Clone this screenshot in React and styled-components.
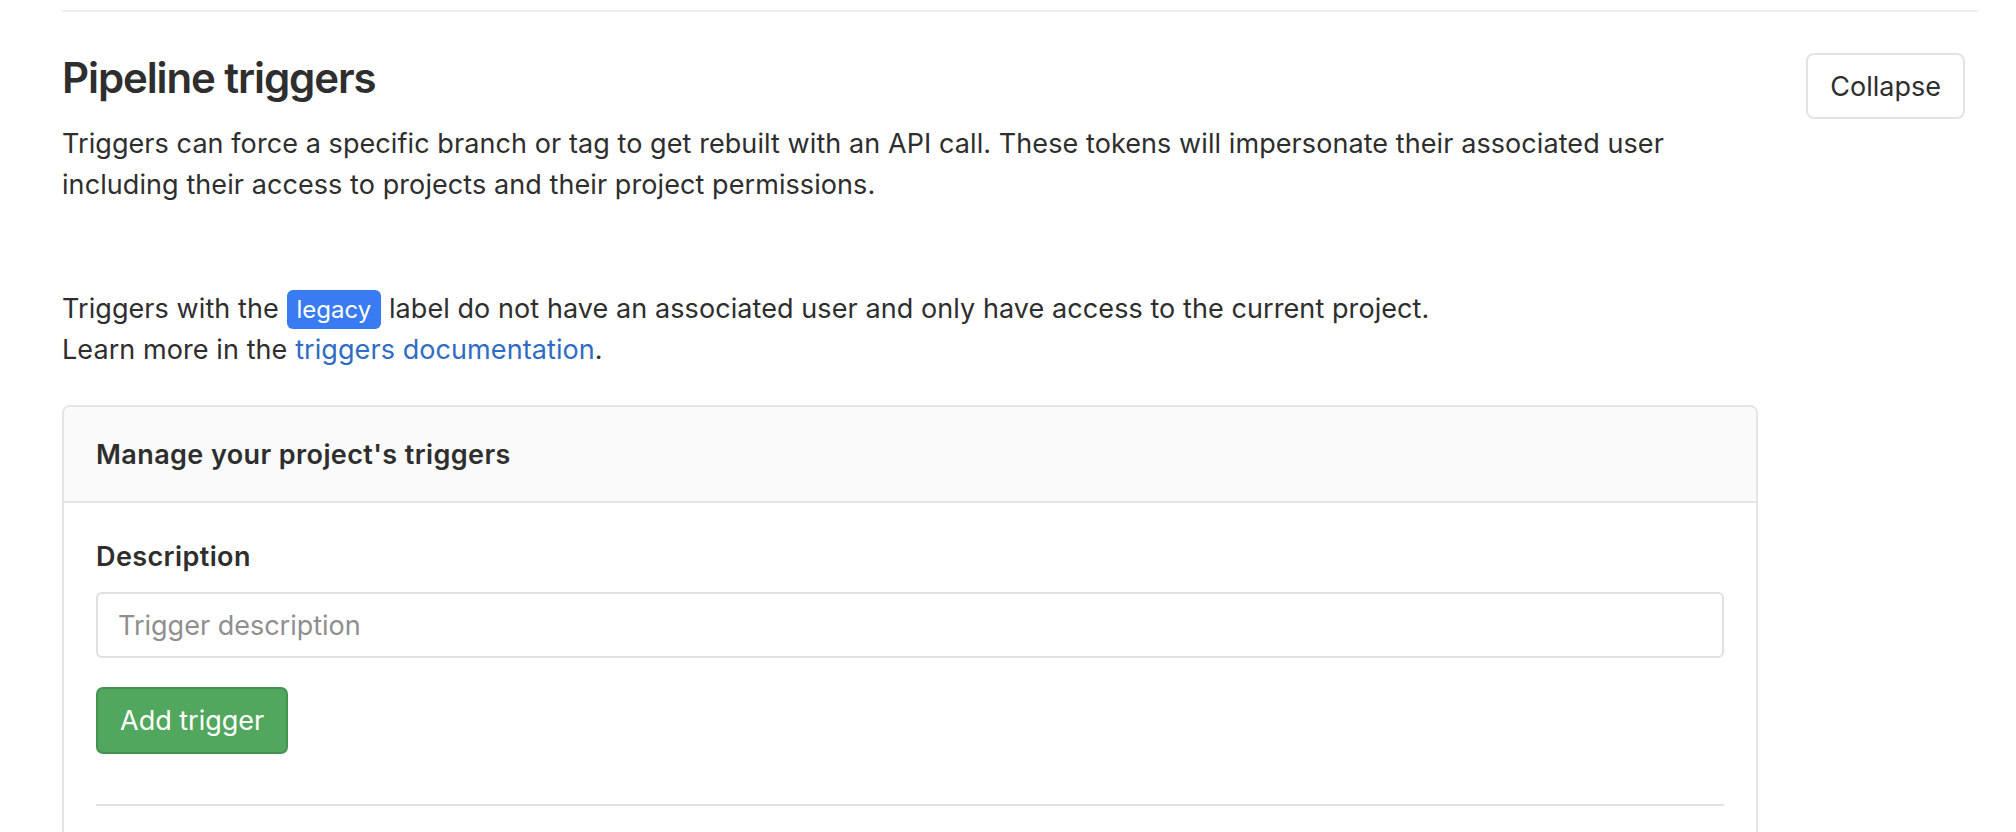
import React from 'react';
import styled, { createGlobalStyle } from 'styled-components';

const GlobalStyle = createGlobalStyle`
  html, body {
    margin: 0;
    padding: 0;
    background: #ffffff;
  }
  body {
    font-family: Inter, "Noto Sans", "Liberation Sans", sans-serif;
    color: #2e2e2e;
  }
  * {
    box-sizing: border-box;
  }
`;

const Page = styled.div`
  padding: 10px 38px 0 62px;
  width: 2016px;
  height: 832px;
  overflow: hidden;
`;

const Section = styled.section`
  border-top: 2px solid #efefef;
`;

const SettingsHeader = styled.div`
  display: flex;
  align-items: flex-start;
  justify-content: space-between;
  margin-top: 41px;
`;

const HeaderText = styled.div`
  flex: 1;
  min-width: 0;
`;

const Title = styled.h4`
  margin: 0;
  font-size: 42px;
  line-height: 50px;
  font-weight: 600;
  color: #2e2e2e;
  letter-spacing: -1.1px;
`;

const Lead = styled.p`
  margin: ${props => props.spaced ? '83px' : '20px'} 0 0;
  max-width: 1680px;
  font-size: 27px;
  line-height: 41px;
  letter-spacing: 0.08px;
  color: #2e2e2e;
`;

const CollapseButton = styled.button`
  flex-shrink: 0;
  height: 66px;
  margin-right: 13px;
  padding: 0 22px;
  background: #ffffff;
  border: 2px solid #e3e3e3;
  border-radius: 8px;
  font-family: inherit;
  font-size: 27px;
  color: #2e2e2e;
`;

const Badge = styled.span`
  display: inline-block;
  margin: 2px 0 0 0;
  padding: 0 10px;
  height: 39px;
  line-height: 39px;
  vertical-align: top;
  background: #387bf2;
  color: #ffffff;
  border-radius: 6px;
  font-size: 24px;
  letter-spacing: 0;
`;

const Link = styled.a`
  color: #2f6cc4;
  text-decoration: none;
`;

const Card = styled.div`
  width: 1696px;
  margin-top: 35px;
  border: 2px solid #e5e5e5;
  border-radius: 8px;
`;

const CardHeader = styled.div`
  padding: 27px 32px 26px;
  background: #fafafa;
  border-bottom: 2px solid #e5e5e5;
  border-radius: 6px 6px 0 0;
  font-size: 27px;
  line-height: 41px;
  font-weight: 600;
  letter-spacing: 0.4px;
`;

const CardBody = styled.div`
  padding: 33px 32px 40px;
`;

const Label = styled.label`
  display: block;
  font-size: 27px;
  line-height: 41px;
  font-weight: 600;
  letter-spacing: 0.4px;
`;

const TextInput = styled.input`
  display: block;
  width: 100%;
  height: 66px;
  margin-top: 15px;
  padding: 0 20px;
  border: 2px solid #e0e0e0;
  border-radius: 6px;
  font-family: inherit;
  font-size: 27px;
  color: #2e2e2e;
  outline: none;

  &::placeholder {
    color: #8f8f8f;
  }
`;

const AddButton = styled.button`
  display: block;
  height: 67px;
  margin-top: 29px;
  padding: 0 22px;
  background: #52a75e;
  border: 2px solid #43924f;
  border-radius: 7px;
  font-family: inherit;
  font-size: 27px;
  color: #ffffff;
`;

const Divider = styled.hr`
  margin: 50px 0 0;
  border: 0;
  border-top: 2px solid #e3e3e3;
`;

export default function App() {
  return (
    <>
      <GlobalStyle />
      <Page>
        <Section>
          <SettingsHeader>
            <HeaderText>
              <Title>Pipeline triggers</Title>
              <Lead>
                Triggers can force a specific branch or tag to get rebuilt with an API call. These tokens will impersonate their associated user including their access to projects and their project permissions.
              </Lead>
            </HeaderText>
            <CollapseButton>Collapse</CollapseButton>
          </SettingsHeader>

          <Lead spaced>
            Triggers with the <Badge>legacy</Badge> label do not have an associated user and only have access to the current project.
            <br />
            Learn more in the <Link href="#">triggers documentation</Link>.
          </Lead>

          <Card>
            <CardHeader>Manage your project's triggers</CardHeader>
            <CardBody>
              <Label htmlFor="trigger_description">Description</Label>
              <TextInput id="trigger_description" type="text" placeholder="Trigger description" />
              <AddButton>Add trigger</AddButton>
              <Divider />
            </CardBody>
          </Card>
        </Section>
      </Page>
    </>
  );
}
